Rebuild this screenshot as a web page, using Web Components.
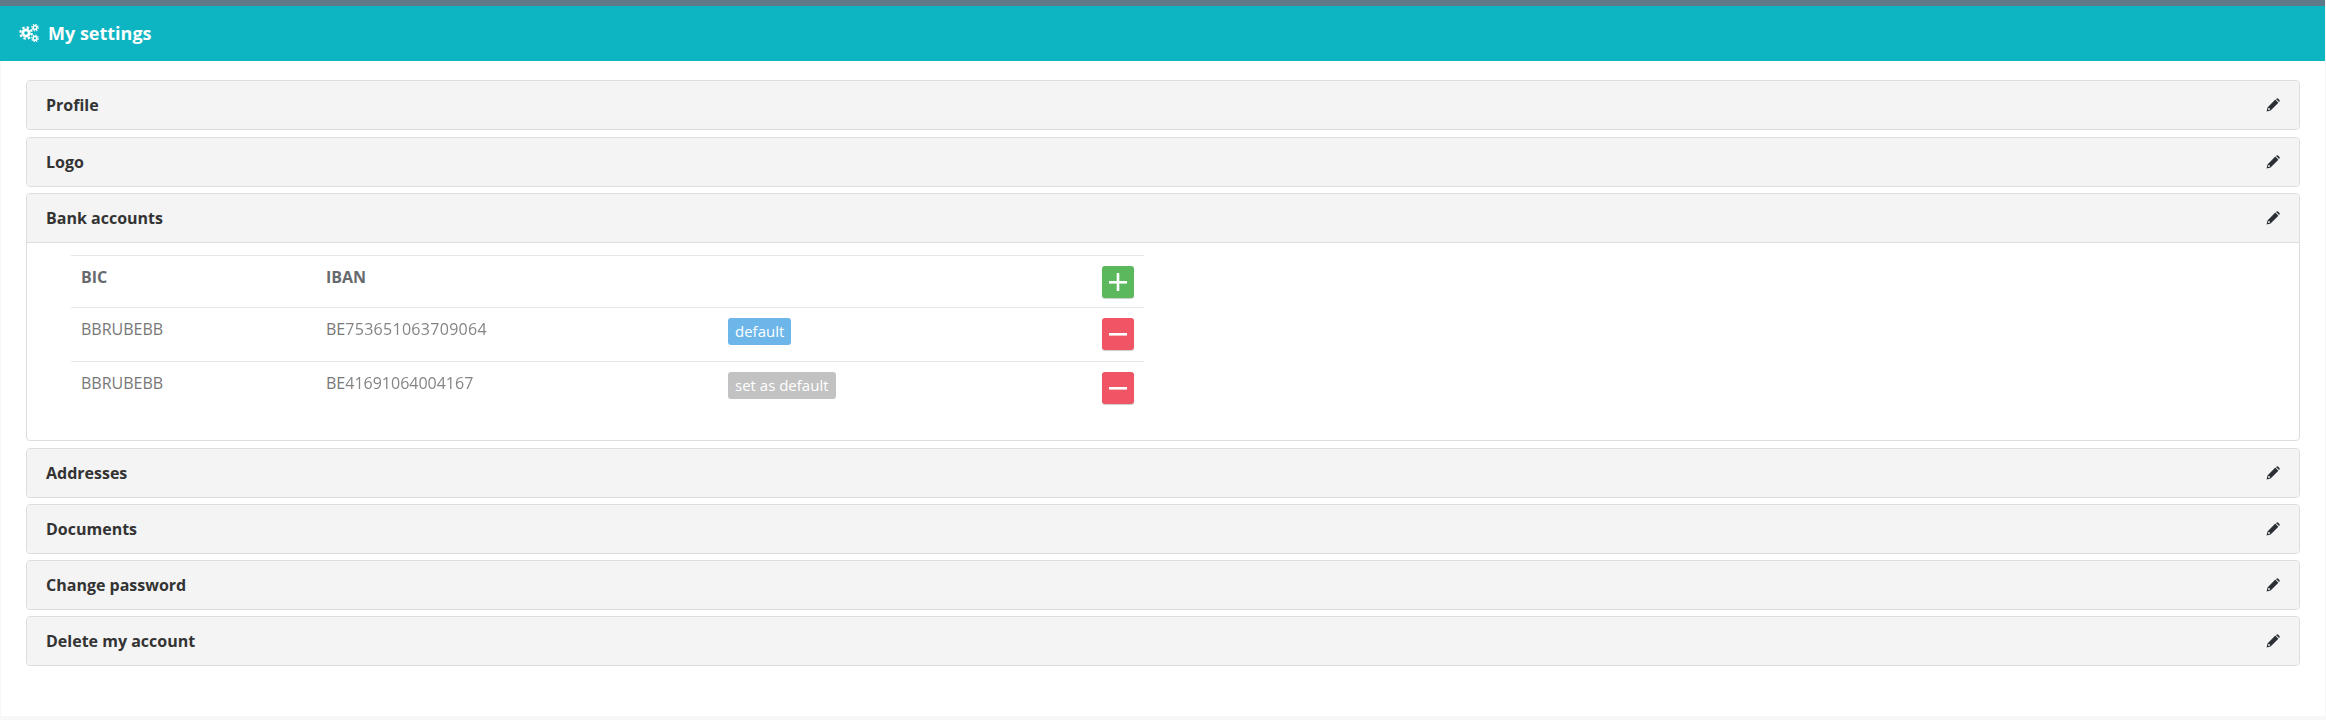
<!DOCTYPE html>
<html>
<head>
<meta charset="utf-8">
<title>My settings</title>
<style>
    html, body { margin: 0; height: 100%; }
    body {
        background: #f7f7f7;
        font-family: "Open Sans", "Liberation Sans", sans-serif;
        font-size: 16px;
        color: #333;
    }
</style>
</head>
<body>
<settings-page heading="My settings">
    <settings-panel heading="Profile"></settings-panel>
    <settings-panel heading="Logo"></settings-panel>
    <settings-panel heading="Bank accounts" open>
        <bank-table>
            <bank-row kind="head" bic="BIC" iban="IBAN"></bank-row>
            <bank-row bic="BBRUBEBB" prefix="BE" iban="753651063709064" spread="0.3" label="default" tone="active"></bank-row>
            <bank-row bic="BBRUBEBB" prefix="BE" iban="41691064004167" label="set as default"></bank-row>
        </bank-table>
    </settings-panel>
    <settings-panel heading="Addresses"></settings-panel>
    <settings-panel heading="Documents"></settings-panel>
    <settings-panel heading="Change password"></settings-panel>
    <settings-panel heading="Delete my account"></settings-panel>
</settings-page>

<script>
const cogsIcon = `
    <svg width="20" height="18" viewBox="0 0 20 18" fill="none" stroke="#fff">
        <circle cx="7" cy="9" r="3.2" stroke-width="2.8"/>
        <circle cx="7" cy="9" r="5.7" stroke-width="2.2" stroke-dasharray="2.4 2.07"/>
        <circle cx="16" cy="3.6" r="1.9" stroke-width="1.6"/>
        <circle cx="16" cy="3.6" r="3.2" stroke-width="1.3" stroke-dasharray="1.3 1.21"/>
        <circle cx="16" cy="14.4" r="1.9" stroke-width="1.6"/>
        <circle cx="16" cy="14.4" r="3.2" stroke-width="1.3" stroke-dasharray="1.3 1.21"/>
    </svg>`;

const pencilIcon = `
    <svg width="14" height="14" viewBox="0 0 14 14" fill="#2b2f33">
        <path d="M0.6 13.4 L1.5 9.4 L9.3 1.6 L12.4 4.7 L4.6 12.5 Z M2.5 9.7 L2 11.9 L4.2 11.4 L3.9 10.4 L2.9 10.1 Z"/>
        <path d="M10 0.9 L10.8 0.4 Q11.4 0 12 0.5 L13.5 2 Q14 2.6 13.6 3.2 L13.1 4 Z"/>
    </svg>`;

class SettingsPage extends HTMLElement {
    constructor() {
        super();
        this.attachShadow({ mode: 'open' });
        this.shadowRoot.innerHTML = `
            <style>
                :host {
                    display: block;
                    height: 716px;
                    margin: 0 1px 0 1px;
                    background: #fff;
                }
                header {
                    height: 53px;
                    display: flex;
                    align-items: center;
                    gap: 9px;
                    padding: 0 0 2px 19px;
                    margin-left: -1px;
                    background: #0db4c1;
                    border-top: 6px solid #5f7988;
                    color: #fff;
                    font-size: 18px;
                    font-weight: 700;
                }
                header svg { display: block; }
                .body {
                    display: flex;
                    flex-direction: column;
                    gap: 6.25px;
                    padding: 19.35px 25px 0 25px;
                }
            </style>
            <header>${cogsIcon}<span>${this.getAttribute('heading')}</span></header>
            <div class="body"><slot></slot></div>
        `;
    }
}

class SettingsPanel extends HTMLElement {
    constructor() {
        super();
        this.attachShadow({ mode: 'open' });
        const open = this.hasAttribute('open');
        this.shadowRoot.innerHTML = `
            <style>
                :host {
                    display: block;
                    border: 1px solid #ddd;
                    border-radius: 4px;
                    background: #fff;
                    overflow: hidden;
                }
                .heading {
                    height: 48px;
                    display: flex;
                    align-items: center;
                    justify-content: space-between;
                    padding: 0 19px 0 19px;
                    background: #f4f4f4;
                    color: #333;
                    font-weight: 700;
                }
                .heading svg { display: block; }
                .content { border-top: 1px solid #ddd; }
            </style>
            <div class="heading"><span>${this.getAttribute('heading')}</span>${pencilIcon}</div>
            ${open ? '<div class="content"><slot></slot></div>' : ''}
        `;
    }
}

class BankTable extends HTMLElement {
    constructor() {
        super();
        this.attachShadow({ mode: 'open' });
        this.shadowRoot.innerHTML = `
            <style>
                :host {
                    display: block;
                    width: 1073px;
                    margin-left: 44px;
                    padding: 12px 0 25.6px 0;
                }
            </style>
            <slot></slot>
        `;
    }
}

class BankRow extends HTMLElement {
    constructor() {
        super();
        this.attachShadow({ mode: 'open' });
        const head = this.getAttribute('kind') === 'head';
        const label = this.getAttribute('label');
        const prefix = this.getAttribute('prefix') || '';
        const iban = this.getAttribute('iban');
        const spread = this.getAttribute('spread') || 0;
        this.shadowRoot.innerHTML = `
            <style>
                :host {
                    display: grid;
                    grid-template-columns: 245px 412px 374px 42px;
                    height: ${head ? 51 : 53}px;
                    border-top: 1px solid #e7e7e7;
                    color: #777;
                }
                :host([kind="head"]) { font-weight: 700; color: #676a6c; }
                .cell { padding: 10px 8px 0 10px; line-height: 22px; }
                .last { padding: 10px 0 0 0; }
                .blur {
                    filter: blur(0.7px);
                    opacity: 0.9;
                    letter-spacing: ${spread}px;
                }
                .tag {
                    display: inline-block;
                    height: 27px;
                    line-height: 27px;
                    padding: 0 7px;
                    border-radius: 3px;
                    color: #fff;
                    background: #c2c2c2;
                    font-size: 15px;
                }
                .tag.active { background: #6cb6ea; }
                .tags { padding: 10px 0 0 0; }
            </style>
            <div class="cell">${this.getAttribute('bic')}</div>
            <div class="cell">${prefix}${head ? iban : `<span class="blur">${iban}</span>`}</div>
            <div class="tags">${label ? `<span class="tag ${this.getAttribute('tone') || ''}">${label}</span>` : ''}</div>
            <div class="last"><round-action kind="${head ? 'add' : 'remove'}"></round-action></div>
        `;
    }
}

class RoundAction extends HTMLElement {
    constructor() {
        super();
        this.attachShadow({ mode: 'open' });
        const add = this.getAttribute('kind') === 'add';
        this.shadowRoot.innerHTML = `
            <style>
                :host {
                    display: block;
                    width: 32px;
                    height: 32px;
                    border-radius: 3px;
                    background: ${add ? '#5cb85c' : '#ef5565'};
                    box-shadow: 0 1px 1px rgba(0, 0, 0, 0.2);
                }
                svg { display: block; }
            </style>
            <svg width="32" height="32" viewBox="0 0 32 32" fill="#fff">
                <rect x="7" y="15" width="18" height="2.6"/>
                ${add ? '<rect x="14.7" y="7" width="2.6" height="18"/>' : ''}
            </svg>
        `;
    }
}

customElements.define('settings-page', SettingsPage);
customElements.define('settings-panel', SettingsPanel);
customElements.define('bank-table', BankTable);
customElements.define('bank-row', BankRow);
customElements.define('round-action', RoundAction);
</script>
</body>
</html>
